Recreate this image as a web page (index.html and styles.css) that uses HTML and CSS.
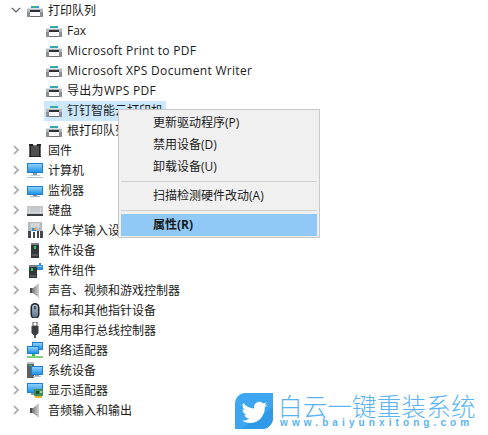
FILE: index.html
```html
<!DOCTYPE html>
<html lang="zh-CN">
<head>
    <meta charset="UTF-8">
    <meta name="viewport" content="width=device-width, initial-scale=1.0">
    <title>设备管理器</title>
    <link rel="stylesheet" href="styles.css">
</head>
<body>
    <!-- shared device icons -->
    <svg class="icon-defs" xmlns="http://www.w3.org/2000/svg">
        <defs>
            <linearGradient id="screen" x1="0" y1="0" x2="0" y2="1">
                <stop offset="0" stop-color="#8fd0f8"/>
                <stop offset="1" stop-color="#1f94e8"/>
            </linearGradient>
            <linearGradient id="cone" x1="0" y1="0" x2="1" y2="0">
                <stop offset="0" stop-color="#5c5c5c"/>
                <stop offset="1" stop-color="#d4d4d4"/>
            </linearGradient>
            <linearGradient id="mouse" x1="0" y1="0" x2="0" y2="1">
                <stop offset="0" stop-color="#a9bdd0"/>
                <stop offset="1" stop-color="#5f7488"/>
            </linearGradient>
        </defs>
        <symbol id="i-printer" viewBox="0 0 16 16">
            <rect x="4" y="4" width="8" height="2" fill="#2f9fe0"/>
            <rect x="6" y="4" width="3" height="2" fill="#3cb56a"/>
            <rect x="0" y="6" width="16" height="8" fill="#b4b8bc"/>
            <rect x="0" y="6" width="16" height="1" fill="#dfe2e4"/>
            <rect x="3" y="8" width="10" height="2" fill="#2c2f33"/>
            <rect x="0" y="10" width="3" height="5" fill="#8a8f94"/>
            <rect x="13" y="10" width="3" height="5" fill="#8a8f94"/>
            <rect x="3" y="10" width="10" height="5" fill="#fafafa"/>
            <rect x="3" y="14" width="10" height="1" fill="#6c7075"/>
        </symbol>
        <symbol id="i-chip" viewBox="0 0 16 16">
            <path d="M2 2h4l.5 1.5h3L10 2h4v13H2z" fill="#232323"/>
            <path d="M2 5h1M2 7h1M2 9h1M2 11h1M2 13h1M13 5h1M13 7h1M13 9h1M13 11h1M13 13h1" stroke="#b0b0b0" stroke-width="1"/>
            <rect x="4" y="4" width="8" height="10" fill="#4f4f4f"/>
        </symbol>
        <symbol id="i-computer" viewBox="0 0 16 16">
            <rect x="0" y="1" width="16" height="10" fill="#1c7fcf"/>
            <rect x="1" y="2" width="14" height="8" fill="url(#screen)"/>
            <rect x="6" y="11" width="4" height="2" fill="#8c9aa6"/>
            <rect x="0" y="15" width="16" height="1" fill="#b5c3cf"/>
            <rect x="3" y="13" width="10" height="1" fill="#c5d0d9"/>
        </symbol>
        <symbol id="i-monitor" viewBox="0 0 16 16">
            <rect x="0" y="4" width="16" height="9" fill="#1c7fcf"/>
            <rect x="1" y="5" width="14" height="7" fill="url(#screen)"/>
            <rect x="6" y="13" width="4" height="1" fill="#7f8c97"/>
            <rect x="3" y="14" width="10" height="1" fill="#a9b5bf"/>
        </symbol>
        <symbol id="i-keyboard" viewBox="0 0 16 16">
            <rect x="0" y="4" width="16" height="9" fill="#c4c6c9"/>
            <rect x="2" y="6" width="12" height="5" fill="#e9ebed"/>
            <path d="M2 7h12M2 9h12M4 6v5M6 6v5M8 6v5M10 6v5M12 6v5" stroke="#a4a8ac" stroke-width=".6"/>
            <rect x="0" y="12" width="16" height="2" fill="#3a3d40"/>
        </symbol>
        <symbol id="i-hid" viewBox="0 0 16 16">
            <rect x="1" y="0" width="14" height="9" fill="#b5b9bd"/>
            <path d="M3 2h10M3 4h10M5 1v6M8 1v6M11 1v6" stroke="#eceef0" stroke-width=".8"/>
            <rect x="5" y="6" width="4" height="3" fill="#2c8fdc"/>
            <rect x="7" y="6" width="2" height="2" fill="#e8963a"/>
            <path d="M1 16V9h3v7zM6 16v-6h2v6zM10 16v-7h2v7zM13 16V9h3v7z" fill="#45484c"/>
        </symbol>
        <symbol id="i-softdev" viewBox="0 0 16 16">
            <rect x="4" y="1" width="8" height="15" fill="#33363a"/>
            <rect x="4" y="1" width="8" height="2" fill="#7b8086"/>
            <rect x="5" y="12" width="6" height="2" fill="#55595e"/>
            <rect x="7" y="4" width="2" height="3" fill="#2fd05a"/>
        </symbol>
        <symbol id="i-softcomp" viewBox="0 0 16 16">
            <rect x="2" y="3" width="8" height="13" fill="#33363a"/>
            <rect x="2" y="3" width="8" height="2" fill="#7b8086"/>
            <rect x="3" y="13" width="6" height="2" fill="#55595e"/>
            <rect x="4" y="6" width="2" height="3" fill="#2fd05a"/>
            <path d="M10 3h2V1h2v2h2v5h-6z" fill="#2c8fdc"/>
            <rect x="11" y="4" width="4" height="1" fill="#8fc8f2"/>
        </symbol>
        <symbol id="i-speaker" viewBox="0 0 16 16">
            <path d="M3 6h3l6-5v15l-6-5H3z" fill="url(#cone)"/>
            <rect x="3" y="6" width="2" height="5" fill="#4d4d4d"/>
        </symbol>
        <symbol id="i-mouse" viewBox="0 0 16 16">
            <rect x="3.5" y="1" width="9" height="16" rx="4.5" fill="#22262b"/>
            <rect x="5" y="2.5" width="6" height="13" rx="3" fill="url(#mouse)"/>
            <rect x="7.3" y="4" width="1.4" height="3.5" rx=".7" fill="#2a2f35"/>
        </symbol>
        <symbol id="i-usb" viewBox="0 0 16 16">
            <rect x="6" y="0" width="4" height="4" fill="#fff" stroke="#555"/>
            <path d="M4.5 4h7v7l-2 2h-3l-2-2z" fill="#3b3d40"/>
            <rect x="7" y="13" width="2" height="3" fill="#55585c"/>
        </symbol>
        <symbol id="i-network" viewBox="0 0 16 16">
            <rect x="5" y="0" width="11" height="8" fill="#1c7fcf"/>
            <rect x="6" y="1" width="9" height="6" fill="url(#screen)"/>
            <rect x="0" y="4" width="12" height="8" fill="#1c7fcf"/>
            <rect x="1" y="5" width="10" height="6" fill="url(#screen)"/>
            <rect x="5" y="12" width="3" height="2" fill="#39b54a"/>
            <rect x="0" y="14" width="16" height="2" fill="#7fd07f"/>
        </symbol>
        <symbol id="i-system" viewBox="0 0 16 16">
            <rect x="0" y="0" width="7" height="16" fill="#5b5f63"/>
            <rect x="0" y="0" width="7" height="2" fill="#bfc3c6"/>
            <rect x="2" y="3" width="3" height="1" fill="#2fd05a"/>
            <rect x="4" y="4" width="12" height="9" fill="#1c7fcf"/>
            <rect x="5" y="5" width="10" height="7" fill="url(#screen)"/>
            <rect x="8" y="13" width="4" height="1" fill="#8c9aa6"/>
            <rect x="6" y="14" width="8" height="1" fill="#b5c3cf"/>
        </symbol>
        <symbol id="i-display" viewBox="0 0 16 16">
            <rect x="0" y="1" width="16" height="10" fill="#1c7fcf"/>
            <rect x="1" y="2" width="14" height="8" fill="url(#screen)"/>
            <rect x="4" y="11" width="4" height="2" fill="#8c9aa6"/>
            <rect x="7" y="7" width="9" height="7" fill="#3f8f5a"/>
            <rect x="9" y="9" width="3" height="3" fill="#1f4f30"/>
            <rect x="13" y="9" width="2" height="2" fill="#a4d0a8"/>
            <path d="M8 14h7v2H8z" fill="#eab32c"/>
        </symbol>
    </svg>

    <ul class="tree">
        <li class="row">
            <svg class="chevron chevron-open" viewBox="0 0 10 6"><path d="M.8.8 5 5l4.2-4.2" /></svg>
            <svg class="icon"><use href="#i-printer"/></svg>
            <span class="label">打印队列</span>
        </li>
        <li class="row row-child"><svg class="icon"><use href="#i-printer"/></svg><span class="label">Fax</span></li>
        <li class="row row-child"><svg class="icon"><use href="#i-printer"/></svg><span class="label label-latin">Microsoft Print to PDF</span></li>
        <li class="row row-child"><svg class="icon"><use href="#i-printer"/></svg><span class="label label-latin">Microsoft XPS Document Writer</span></li>
        <li class="row row-child"><svg class="icon"><use href="#i-printer"/></svg><span class="label label-latin">导出为WPS PDF</span></li>
        <li class="row row-child row-selected"><svg class="icon"><use href="#i-printer"/></svg><span class="label">钉钉智能云打印机</span></li>
        <li class="row row-child"><svg class="icon"><use href="#i-printer"/></svg><span class="label">根打印队列系统</span></li>
        <li class="row"><svg class="chevron" viewBox="0 0 6 10"><path d="M1 1l4 4-4 4"/></svg><svg class="icon"><use href="#i-chip"/></svg><span class="label">固件</span></li>
        <li class="row"><svg class="chevron" viewBox="0 0 6 10"><path d="M1 1l4 4-4 4"/></svg><svg class="icon"><use href="#i-computer"/></svg><span class="label">计算机</span></li>
        <li class="row"><svg class="chevron" viewBox="0 0 6 10"><path d="M1 1l4 4-4 4"/></svg><svg class="icon"><use href="#i-monitor"/></svg><span class="label">监视器</span></li>
        <li class="row"><svg class="chevron" viewBox="0 0 6 10"><path d="M1 1l4 4-4 4"/></svg><svg class="icon"><use href="#i-keyboard"/></svg><span class="label">键盘</span></li>
        <li class="row"><svg class="chevron" viewBox="0 0 6 10"><path d="M1 1l4 4-4 4"/></svg><svg class="icon"><use href="#i-hid"/></svg><span class="label">人体学输入设备</span></li>
        <li class="row"><svg class="chevron" viewBox="0 0 6 10"><path d="M1 1l4 4-4 4"/></svg><svg class="icon"><use href="#i-softdev"/></svg><span class="label">软件设备</span></li>
        <li class="row"><svg class="chevron" viewBox="0 0 6 10"><path d="M1 1l4 4-4 4"/></svg><svg class="icon"><use href="#i-softcomp"/></svg><span class="label">软件组件</span></li>
        <li class="row"><svg class="chevron" viewBox="0 0 6 10"><path d="M1 1l4 4-4 4"/></svg><svg class="icon"><use href="#i-speaker"/></svg><span class="label">声音、视频和游戏控制器</span></li>
        <li class="row"><svg class="chevron" viewBox="0 0 6 10"><path d="M1 1l4 4-4 4"/></svg><svg class="icon"><use href="#i-mouse"/></svg><span class="label">鼠标和其他指针设备</span></li>
        <li class="row"><svg class="chevron" viewBox="0 0 6 10"><path d="M1 1l4 4-4 4"/></svg><svg class="icon"><use href="#i-usb"/></svg><span class="label">通用串行总线控制器</span></li>
        <li class="row"><svg class="chevron" viewBox="0 0 6 10"><path d="M1 1l4 4-4 4"/></svg><svg class="icon"><use href="#i-network"/></svg><span class="label">网络适配器</span></li>
        <li class="row"><svg class="chevron" viewBox="0 0 6 10"><path d="M1 1l4 4-4 4"/></svg><svg class="icon"><use href="#i-system"/></svg><span class="label">系统设备</span></li>
        <li class="row"><svg class="chevron" viewBox="0 0 6 10"><path d="M1 1l4 4-4 4"/></svg><svg class="icon"><use href="#i-display"/></svg><span class="label">显示适配器</span></li>
        <li class="row"><svg class="chevron" viewBox="0 0 6 10"><path d="M1 1l4 4-4 4"/></svg><svg class="icon"><use href="#i-speaker"/></svg><span class="label">音频输入和输出</span></li>
    </ul>

    <!-- context menu over the tree -->
    <div class="menu">
        <div class="menu-item">更新驱动程序(P)</div>
        <div class="menu-item">禁用设备(D)</div>
        <div class="menu-item">卸载设备(U)</div>
        <div class="menu-sep"></div>
        <div class="menu-item">扫描检测硬件改动(A)</div>
        <div class="menu-sep"></div>
        <div class="menu-item menu-item-active">属性(R)</div>
    </div>

    <!-- watermark -->
    <div class="brand">
        <svg class="brand-logo" viewBox="0 0 38 36" preserveAspectRatio="none">
            <path d="M10 0h28v25a11 11 0 0 1-11 11H0V10A10 10 0 0 1 10 0z" fill="#3ea6f0"/>
            <path d="M38 14v11a11 11 0 0 1-11 11H6z" fill="#2f9be8"/>
            <g transform="translate(6.5 6.5) scale(1.08)">
                <path fill="#fff" d="M23.95 4.57a10 10 0 0 1-2.82.77 4.96 4.96 0 0 0 2.16-2.72c-.95.55-2 .96-3.12 1.19a4.92 4.92 0 0 0-8.38 4.48C7.69 8.1 4.07 6.13 1.64 3.16a4.82 4.82 0 0 0-.67 2.48c0 1.71.87 3.21 2.19 4.1a4.9 4.9 0 0 1-2.23-.61v.06c0 2.39 1.7 4.38 3.95 4.83a5 5 0 0 1-2.21.08 4.94 4.94 0 0 0 4.6 3.42A9.87 9.87 0 0 1 0 19.54a13.9 13.9 0 0 0 7.55 2.21c9.06 0 14-7.5 14-13.98 0-.21 0-.42-.02-.63a9.94 9.94 0 0 0 2.46-2.55z"/>
            </g>
        </svg>
        <div class="brand-text">
            <div class="brand-name">白云一键重装系统</div>
            <div class="brand-url">www.baiyunxitong.com</div>
        </div>
    </div>
</body>
</html>
```

FILE: styles.css
```css
body {
    margin: 0;
    background-color: #fff;
    color: #1a1a1a;
    font-family: "Open Sans", "Noto Sans CJK SC", sans-serif;
    font-size: 12px;
    height: 435px;
    overflow: hidden;
    position: relative;
}
.icon-defs {
    position: absolute;
    width: 0;
    height: 0;
}
.tree {
    list-style: none;
    margin: 0;
    padding: 1px 0 0;
}
.row {
    display: flex;
    align-items: center;
    height: 20px;
    padding-left: 27px;
    position: relative;
}
.row-child {
    padding-left: 46px;
}
.row-selected {
    width: fit-content;
    margin-left: 44px;
    padding-left: 2px;
    padding-right: 3px;
    background-color: #cce8ff;
}
.label {
    height: 20px;
    line-height: 20px;
    margin-left: 5px;
    white-space: nowrap;
}
.label-latin {
    letter-spacing: 0.3px;
}
.icon {
    width: 16px;
    height: 16px;
    flex: none;
    margin-top: -2px;
    overflow: visible;
}
.chevron {
    position: absolute;
    left: 13px;
    top: 4px;
    width: 6px;
    height: 10px;
    fill: none;
    stroke: #a6a6a6;
    stroke-width: 1.6;
}
.chevron-open {
    left: 11px;
    top: 6px;
    width: 10px;
    height: 6px;
    stroke: #595959;
    stroke-width: 1.2;
}
.menu {
    position: absolute;
    left: 118px;
    top: 109px;
    width: 198px;
    padding: 2px 1px 1px;
    background-color: #f0f0f0;
    border: 1px solid #c8c8c8;
}
.menu-item {
    height: 22px;
    line-height: 22px;
    padding-left: 32px;
    margin: 0 1px;
}
.menu-item-active {
    background-color: #90c8f6;
    font-weight: bold;
}
.menu-sep {
    height: 1px;
    background-color: #d0d0d0;
    margin: 3px 1px;
}
.brand {
    position: absolute;
    left: 235px;
    top: 393px;
    display: flex;
    gap: 5px;
}
.brand-logo {
    width: 38px;
    height: 36px;
    flex: none;
}
.brand-text {
    color: #5ab4f2;
}
.brand-name {
    font-family: "Noto Sans CJK SC", sans-serif;
    font-size: 24.5px;
    font-weight: 300;
    letter-spacing: 0.2px;
    height: 25px;
    line-height: 25px;
    white-space: nowrap;
}
.brand-url {
    font-family: "Liberation Sans", sans-serif;
    font-size: 10px;
    font-weight: bold;
    letter-spacing: 4.1px;
    height: 10px;
    line-height: 10px;
    margin-left: 2px;
    white-space: nowrap;
}
```
